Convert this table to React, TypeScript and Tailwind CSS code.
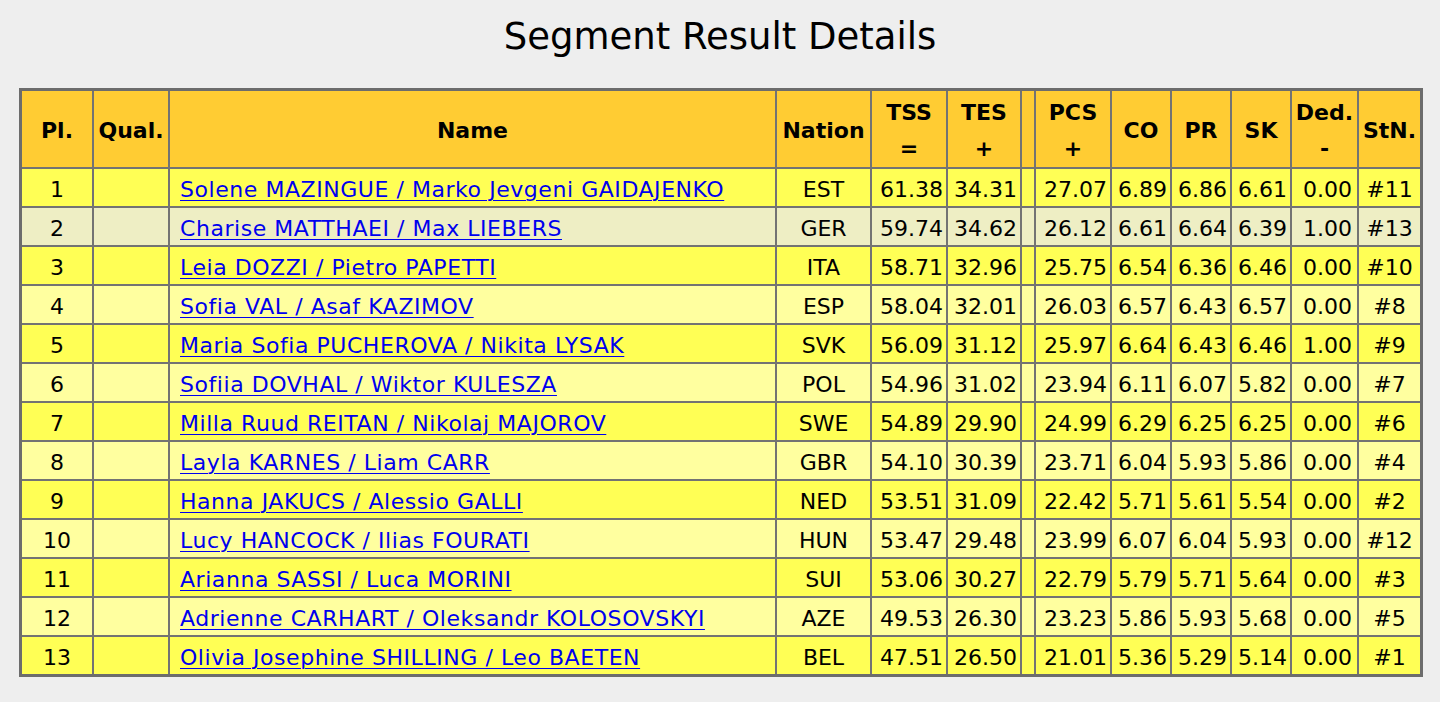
const rows = [
  ["1", "Solene MAZINGUE / Marko Jevgeni GAIDAJENKO", "EST", "61.38", "34.31", "27.07", "6.89", "6.86", "6.61", "0.00", "#11"],
  ["2", "Charise MATTHAEI / Max LIEBERS", "GER", "59.74", "34.62", "26.12", "6.61", "6.64", "6.39", "1.00", "#13"],
  ["3", "Leia DOZZI / Pietro PAPETTI", "ITA", "58.71", "32.96", "25.75", "6.54", "6.36", "6.46", "0.00", "#10"],
  ["4", "Sofia VAL / Asaf KAZIMOV", "ESP", "58.04", "32.01", "26.03", "6.57", "6.43", "6.57", "0.00", "#8"],
  ["5", "Maria Sofia PUCHEROVA / Nikita LYSAK", "SVK", "56.09", "31.12", "25.97", "6.64", "6.43", "6.46", "1.00", "#9"],
  ["6", "Sofiia DOVHAL / Wiktor KULESZA", "POL", "54.96", "31.02", "23.94", "6.11", "6.07", "5.82", "0.00", "#7"],
  ["7", "Milla Ruud REITAN / Nikolaj MAJOROV", "SWE", "54.89", "29.90", "24.99", "6.29", "6.25", "6.25", "0.00", "#6"],
  ["8", "Layla KARNES / Liam CARR", "GBR", "54.10", "30.39", "23.71", "6.04", "5.93", "5.86", "0.00", "#4"],
  ["9", "Hanna JAKUCS / Alessio GALLI", "NED", "53.51", "31.09", "22.42", "5.71", "5.61", "5.54", "0.00", "#2"],
  ["10", "Lucy HANCOCK / Ilias FOURATI", "HUN", "53.47", "29.48", "23.99", "6.07", "6.04", "5.93", "0.00", "#12"],
  ["11", "Arianna SASSI / Luca MORINI", "SUI", "53.06", "30.27", "22.79", "5.79", "5.71", "5.64", "0.00", "#3"],
  ["12", "Adrienne CARHART / Oleksandr KOLOSOVSKYI", "AZE", "49.53", "26.30", "23.23", "5.86", "5.93", "5.68", "0.00", "#5"],
  ["13", "Olivia Josephine SHILLING / Leo BAETEN", "BEL", "47.51", "26.50", "21.01", "5.36", "5.29", "5.14", "0.00", "#1"],
];

const headers: [string, string?][] = [
  ["Pl."],
  ["Qual."],
  ["Name"],
  ["Nation"],
  ["TSS", "="],
  ["TES", "+"],
  [""],
  ["PCS", "+"],
  ["CO"],
  ["PR"],
  ["SK"],
  ["Ded.", "-"],
  ["StN."],
];

function rowBg(i: number) {
  if (i === 1) return "bg-[#eeeec4]";
  return i % 2 === 0 ? "bg-[#ffff55]" : "bg-[#ffff9f]";
}

export default function App() {
  return (
    <div className="min-h-[702px] bg-[#eeeeee] pt-[13px] font-['Verdana','DejaVu_Sans',sans-serif] text-black">
      <h1 className="text-center text-[37px] leading-[48px] font-normal">Segment Result Details</h1>

      <div className="mt-[27px] ml-[19px] inline-grid grid-cols-[70px_74px_605px_93px_74px_72px_12px_74px_58px_58px_58px_65px_61px] gap-[2px] border-[3px] border-[#6c6c6c] bg-[#737373] text-[22px]">
        {headers.map(([top, bottom], i) => (
          <div
            key={i}
            className="flex h-[76px] flex-col items-center justify-center bg-[#ffcc33] pt-[4px] font-bold leading-[36px]"
          >
            <span>{top}</span>
            {bottom && <span>{bottom}</span>}
          </div>
        ))}

        {rows.map((r, i) => {
          const bg = rowBg(i);
          const cell = `h-[37px] flex items-center pt-[3px] ${bg}`;
          return (
            <div key={r[0]} className="contents">
              <div className={`${cell} justify-center`}>{r[0]}</div>
              <div className={cell} />
              <div className={`${cell} pl-[10px]`}>
                <a
                  href="#"
                  className="text-[#0000ee] tracking-[0.55px] underline decoration-1 underline-offset-[3px]"
                >
                  {r[1]}
                </a>
              </div>
              <div className={`${cell} justify-center`}>{r[2]}</div>
              <div className={`${cell} justify-end pr-[3px]`}>{r[3]}</div>
              <div className={`${cell} justify-end pr-[3px]`}>{r[4]}</div>
              <div className={cell} />
              <div className={`${cell} justify-end pr-[3px]`}>{r[5]}</div>
              <div className={`${cell} justify-end pr-[3px]`}>{r[6]}</div>
              <div className={`${cell} justify-end pr-[3px]`}>{r[7]}</div>
              <div className={`${cell} justify-end pr-[3px]`}>{r[8]}</div>
              <div className={`${cell} justify-end pr-[5px]`}>{r[9]}</div>
              <div className={`${cell} justify-center`}>{r[10]}</div>
            </div>
          );
        })}
      </div>
    </div>
  );
}
